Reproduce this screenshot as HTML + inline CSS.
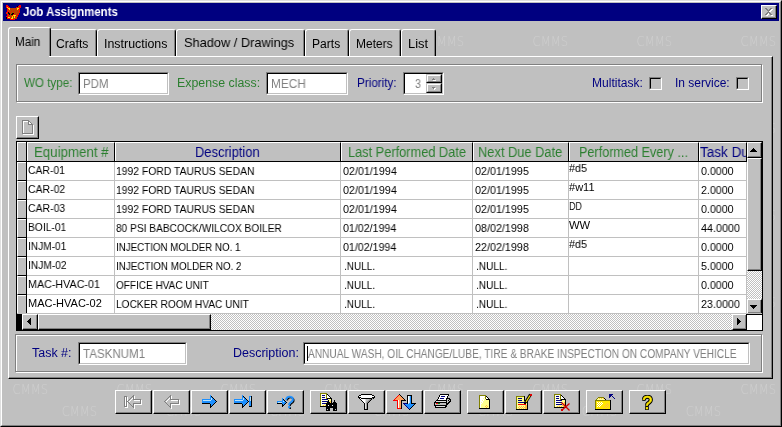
<!DOCTYPE html>
<html>
<head>
<meta charset="utf-8">
<title>Job Assignments</title>
<style>
html,body{margin:0;padding:0;}
body{width:782px;height:427px;background:#c0c0c0;position:relative;overflow:hidden;font-family:"Liberation Sans",Arial,sans-serif;font-size:12px;color:#000;}
*{box-sizing:border-box;}
.abs,.abs *{position:absolute;}
#win{position:absolute;left:0;top:0;width:782px;height:427px;background:#c0c0c0;}
.a{position:absolute;}
.t{position:absolute;white-space:nowrap;line-height:14px;}
.wm{position:absolute;white-space:nowrap;font-size:14px;line-height:14px;color:#c9c9c9;letter-spacing:-0.5px;}
.green{color:#3f7f3f;}
.navy{color:#000080;}
.gray{color:#808080;}
.inp{position:absolute;background:#fff;border-top:1px solid #808080;border-left:1px solid #808080;border-right:1px solid #fff;border-bottom:1px solid #fff;}
.inp>i{position:absolute;left:0;top:0;right:0;bottom:0;border-top:1px solid #000;border-left:1px solid #000;border-right:1px solid #c0c0c0;border-bottom:1px solid #c0c0c0;}
.inp>span{position:absolute;left:5px;top:5px;font-size:11px;line-height:13px;color:#808080;white-space:nowrap;}
.etch{position:absolute;border:1px solid #808080;box-shadow:inset 1px 1px 0 #fff, 1px 1px 0 #fff;}
.btn{position:absolute;background:#c0c0c0;border-top:1px solid #fff;border-left:1px solid #fff;border-right:1px solid #000;border-bottom:1px solid #000;}
.btn>i{position:absolute;left:0;top:0;right:0;bottom:0;border-right:1px solid #808080;border-bottom:1px solid #808080;}
.sp{border-top-color:#c0c0c0;border-left-color:#c0c0c0;}
.sp>i{border-top:1px solid #fff;border-left:1px solid #fff;}
.tab{position:absolute;top:29px;height:27px;border-top:1px solid #fff;border-left:1px solid #fff;border-right:1px solid #000;border-radius:3px 3px 0 0;}
.tab>i{position:absolute;right:0;top:1px;bottom:0;width:1px;background:#808080;}
.tab>span{position:absolute;left:0;right:0;top:7px;text-align:center;font-size:12px;line-height:14px;white-space:nowrap;}
.hd{position:absolute;top:142px;height:19px;background:#c0c0c0;border-top:1px solid #fff;border-left:1px solid #fff;border-right:1px solid #000;}
.hd>span{position:absolute;left:0;right:0;top:2px;}
.cell{position:absolute;font-size:11px;line-height:13px;white-space:nowrap;}
.chk{position:absolute;width:13px;height:13px;background:#c0c0c0;border-top:1px solid #808080;border-left:1px solid #808080;border-right:1px solid #fff;border-bottom:1px solid #fff;}
.chk>i{position:absolute;left:0;top:0;right:0;bottom:0;border-top:1px solid #000;border-left:1px solid #000;border-right:1px solid #c0c0c0;border-bottom:1px solid #c0c0c0;}
.x{will-change:transform;position:absolute;white-space:nowrap;transform-origin:0 0;}
.dither{background-image:conic-gradient(#fff 25%,#c0c0c0 0 50%,#fff 0 75%,#c0c0c0 0);background-size:2px 2px;}
</style>
</head>
<body>
<div id="win">
<!-- window border -->
<div class="a" style="left:0;top:0;width:782px;height:427px;border-top:1px solid #dfdfdf;border-left:1px solid #dfdfdf;border-right:1px solid #000;border-bottom:1px solid #000;"></div>
<div class="a" style="left:1px;top:1px;width:780px;height:425px;border-top:1px solid #fff;border-left:1px solid #fff;border-right:1px solid #808080;border-bottom:1px solid #808080;"></div>
<!-- title bar -->
<div class="a" style="left:3px;top:3px;width:776px;height:18px;background:#000080;"></div>
<svg class="a" style="left:6px;top:5px;" width="15" height="15" viewBox="0 0 15 15" shape-rendering="crispEdges"><rect x="0" y="0" width="2" height="1" fill="#ff0000"/><rect x="13" y="0" width="2" height="1" fill="#ff0000"/><rect x="0" y="1" width="3" height="1" fill="#ff0000"/><rect x="11" y="1" width="1" height="1" fill="#000"/><rect x="12" y="1" width="3" height="1" fill="#ff0000"/><rect x="0" y="2" width="1" height="1" fill="#ff0000"/><rect x="1" y="2" width="1" height="1" fill="#ffe800"/><rect x="2" y="2" width="2" height="1" fill="#ff0000"/><rect x="10" y="2" width="2" height="1" fill="#ff0000"/><rect x="12" y="2" width="1" height="1" fill="#808000"/><rect x="13" y="2" width="2" height="1" fill="#ff0000"/><rect x="1" y="3" width="1" height="1" fill="#ff0000"/><rect x="2" y="3" width="2" height="1" fill="#ffe800"/><rect x="4" y="3" width="1" height="1" fill="#808000"/><rect x="5" y="3" width="1" height="1" fill="#ff0000"/><rect x="6" y="3" width="1" height="1" fill="#808000"/><rect x="7" y="3" width="1" height="1" fill="#ff0000"/><rect x="8" y="3" width="1" height="1" fill="#808000"/><rect x="9" y="3" width="1" height="1" fill="#ff0000"/><rect x="10" y="3" width="1" height="1" fill="#808000"/><rect x="11" y="3" width="2" height="1" fill="#ffe800"/><rect x="13" y="3" width="1" height="1" fill="#ff0000"/><rect x="1" y="4" width="2" height="1" fill="#ff0000"/><rect x="3" y="4" width="1" height="1" fill="#ffe800"/><rect x="4" y="4" width="1" height="1" fill="#ff0000"/><rect x="5" y="4" width="1" height="1" fill="#808000"/><rect x="6" y="4" width="1" height="1" fill="#ff0000"/><rect x="7" y="4" width="1" height="1" fill="#808000"/><rect x="8" y="4" width="1" height="1" fill="#ff0000"/><rect x="9" y="4" width="1" height="1" fill="#808000"/><rect x="10" y="4" width="1" height="1" fill="#ff0000"/><rect x="11" y="4" width="1" height="1" fill="#ffe800"/><rect x="12" y="4" width="2" height="1" fill="#ff0000"/><rect x="1" y="5" width="1" height="1" fill="#ff0000"/><rect x="2" y="5" width="1" height="1" fill="#808000"/><rect x="3" y="5" width="1" height="1" fill="#ff0000"/><rect x="4" y="5" width="1" height="1" fill="#808000"/><rect x="5" y="5" width="1" height="1" fill="#ff0000"/><rect x="6" y="5" width="1" height="1" fill="#808000"/><rect x="7" y="5" width="1" height="1" fill="#ff0000"/><rect x="8" y="5" width="1" height="1" fill="#808000"/><rect x="9" y="5" width="1" height="1" fill="#ff0000"/><rect x="10" y="5" width="1" height="1" fill="#808000"/><rect x="11" y="5" width="1" height="1" fill="#ff0000"/><rect x="12" y="5" width="1" height="1" fill="#808000"/><rect x="13" y="5" width="1" height="1" fill="#ff0000"/><rect x="1" y="6" width="2" height="1" fill="#ff0000"/><rect x="3" y="6" width="1" height="1" fill="#808000"/><rect x="4" y="6" width="1" height="1" fill="#ff0000"/><rect x="5" y="6" width="1" height="1" fill="#808000"/><rect x="6" y="6" width="1" height="1" fill="#ff0000"/><rect x="7" y="6" width="1" height="1" fill="#808000"/><rect x="8" y="6" width="1" height="1" fill="#ff0000"/><rect x="9" y="6" width="1" height="1" fill="#808000"/><rect x="10" y="6" width="1" height="1" fill="#ff0000"/><rect x="11" y="6" width="1" height="1" fill="#808000"/><rect x="12" y="6" width="2" height="1" fill="#ff0000"/><rect x="0" y="7" width="2" height="1" fill="#ff0000"/><rect x="2" y="7" width="1" height="1" fill="#000"/><rect x="3" y="7" width="1" height="1" fill="#ff0000"/><rect x="4" y="7" width="1" height="1" fill="#808000"/><rect x="5" y="7" width="1" height="1" fill="#ff0000"/><rect x="6" y="7" width="1" height="1" fill="#808000"/><rect x="7" y="7" width="1" height="1" fill="#ff0000"/><rect x="8" y="7" width="1" height="1" fill="#808000"/><rect x="9" y="7" width="1" height="1" fill="#ff0000"/><rect x="10" y="7" width="1" height="1" fill="#808000"/><rect x="11" y="7" width="1" height="1" fill="#ff0000"/><rect x="12" y="7" width="1" height="1" fill="#808000"/><rect x="13" y="7" width="1" height="1" fill="#ff0000"/><rect x="0" y="8" width="1" height="1" fill="#ff0000"/><rect x="1" y="8" width="1" height="1" fill="#808000"/><rect x="2" y="8" width="2" height="1" fill="#000"/><rect x="4" y="8" width="1" height="1" fill="#ff0000"/><rect x="5" y="8" width="1" height="1" fill="#808000"/><rect x="6" y="8" width="2" height="1" fill="#000"/><rect x="8" y="8" width="1" height="1" fill="#ff0000"/><rect x="9" y="8" width="1" height="1" fill="#808000"/><rect x="10" y="8" width="1" height="1" fill="#ff0000"/><rect x="11" y="8" width="1" height="1" fill="#808000"/><rect x="12" y="8" width="1" height="1" fill="#ff0000"/><rect x="1" y="9" width="2" height="1" fill="#ff0000"/><rect x="3" y="9" width="1" height="1" fill="#000"/><rect x="4" y="9" width="1" height="1" fill="#808000"/><rect x="5" y="9" width="2" height="1" fill="#000"/><rect x="7" y="9" width="1" height="1" fill="#ff0000"/><rect x="8" y="9" width="1" height="1" fill="#808000"/><rect x="9" y="9" width="1" height="1" fill="#ff0000"/><rect x="10" y="9" width="1" height="1" fill="#808000"/><rect x="11" y="9" width="2" height="1" fill="#ff0000"/><rect x="1" y="10" width="2" height="1" fill="#ff0000"/><rect x="3" y="10" width="1" height="1" fill="#808000"/><rect x="4" y="10" width="1" height="1" fill="#ff0000"/><rect x="5" y="10" width="1" height="1" fill="#808000"/><rect x="6" y="10" width="1" height="1" fill="#ff0000"/><rect x="7" y="10" width="3" height="1" fill="#ffe800"/><rect x="10" y="10" width="2" height="1" fill="#ff0000"/><rect x="0" y="11" width="2" height="1" fill="#ff0000"/><rect x="2" y="11" width="1" height="1" fill="#808000"/><rect x="3" y="11" width="1" height="1" fill="#ff0000"/><rect x="4" y="11" width="1" height="1" fill="#808000"/><rect x="5" y="11" width="1" height="1" fill="#ff0000"/><rect x="6" y="11" width="1" height="1" fill="#ffe800"/><rect x="7" y="11" width="1" height="1" fill="#ff0000"/><rect x="8" y="11" width="1" height="1" fill="#ffe800"/><rect x="9" y="11" width="1" height="1" fill="#ff0000"/><rect x="10" y="11" width="1" height="1" fill="#808000"/><rect x="11" y="11" width="1" height="1" fill="#ff0000"/><rect x="0" y="12" width="1" height="1" fill="#000"/><rect x="1" y="12" width="1" height="1" fill="#ff0000"/><rect x="2" y="12" width="2" height="1" fill="#ffe800"/><rect x="4" y="12" width="1" height="1" fill="#ff0000"/><rect x="5" y="12" width="1" height="1" fill="#808000"/><rect x="6" y="12" width="1" height="1" fill="#ffe800"/><rect x="7" y="12" width="1" height="1" fill="#808000"/><rect x="8" y="12" width="1" height="1" fill="#ffe800"/><rect x="9" y="12" width="1" height="1" fill="#808000"/><rect x="10" y="12" width="1" height="1" fill="#ff0000"/><rect x="0" y="13" width="1" height="1" fill="#000"/><rect x="1" y="13" width="4" height="1" fill="#ff0000"/><rect x="5" y="13" width="2" height="1" fill="#ffe800"/><rect x="7" y="13" width="1" height="1" fill="#ff0000"/><rect x="8" y="13" width="1" height="1" fill="#808000"/><rect x="9" y="13" width="2" height="1" fill="#ff0000"/><rect x="4" y="14" width="5" height="1" fill="#ff0000"/></svg>
<div class="x" style="left:22.80px;top:4.84px;font-size:12px;line-height:14px;color:#fff;transform:scaleX(0.9516);font-weight:bold;">Job Assignments</div>
<!-- close button -->
<div class="btn" style="left:761px;top:5px;width:16px;height:14px;"><i></i>
<svg class="a" style="left:3px;top:2px;" width="9" height="8" viewBox="0 0 9 8" shape-rendering="crispEdges"><path d="M1 1h2v1h1v1h1v-1h1v-1h2v1h-1v1h-1v1h-1v1h1v1h1v1h1v1h-2v-1h-1v-1h-1v1h-1v1h-2v-1h1v-1h1v-1h1v-1h-1v-1h-1v-1h-1z" fill="#fff"/><path d="M0 0h2v1h1v1h1v-1h1v-1h2v1h-1v1h-1v1h-1v1h1v1h1v1h1v1h-2v-1h-1v-1h-1v1h-1v1h-2v-1h1v-1h1v-1h1v-1h-1v-1h-1v-1h-1z" fill="#808080"/></svg>
</div>

<!-- watermarks -->
<svg class="a" style="left:0;top:0;" width="782" height="427">
<defs><pattern id="wmp" x="0" y="30" width="104" height="87" patternUnits="userSpaceOnUse">
<text x="0" y="16" transform="translate(12.6 0) scale(0.80 1)" font-family="DejaVu Sans Light, DejaVu Sans, Liberation Sans, sans-serif" font-weight="200" font-size="14.5" fill="#cecece">CMMS</text>
<text x="0" y="38.2" transform="translate(61.7 0) scale(0.80 1)" font-family="DejaVu Sans Light, DejaVu Sans, Liberation Sans, sans-serif" font-weight="200" font-size="14.5" fill="#cecece">CMMS</text>
</pattern></defs>
<rect x="3" y="21" width="776" height="403" fill="url(#wmp)"/>
</svg>

<!-- tab page -->
<div class="a" style="left:8px;top:56px;width:765px;height:323px;background:#c0c0c0;border-top:1px solid #fff;border-left:1px solid #fff;border-right:1px solid #000;border-bottom:1px solid #000;"></div>
<div class="a" style="left:9px;top:57px;width:763px;height:321px;border-right:1px solid #808080;border-bottom:1px solid #808080;"></div>

<!-- tabs -->
<div class="tab" style="left:51px;width:46px;background:#c0c0c0;border-left:none;border-top-left-radius:0;"><i></i></div>
<div class="tab" style="left:97px;width:79px;background:#c0c0c0;"><i></i></div>
<div class="tab" style="left:176px;width:129px;background:#c0c0c0;"><i></i></div>
<div class="tab" style="left:305px;width:44px;background:#c0c0c0;"><i></i></div>
<div class="tab" style="left:349px;width:52px;background:#c0c0c0;"><i></i></div>
<div class="tab" style="left:401px;width:35px;background:#c0c0c0;"><i></i></div>
<div class="a" style="left:9px;top:56px;width:40px;height:1px;background:#c0c0c0;"></div>
<div class="tab" style="left:8px;top:27px;width:43px;height:29px;background:#c0c0c0;"><i></i></div>

<div class="x" style="left:15.30px;top:34.84px;font-size:12px;line-height:14px;color:#000;transform:scaleX(0.9731);">Main</div>
<div class="x" style="left:56.00px;top:36.84px;font-size:12px;line-height:14px;color:#000;transform:scaleX(1.0125);">Crafts</div>
<div class="x" style="left:103.80px;top:36.84px;font-size:12px;line-height:14px;color:#000;transform:scaleX(1.0346);">Instructions</div>
<div class="x" style="left:184.10px;top:35.32px;font-size:13.5px;line-height:16px;color:#000;transform:scaleX(0.9480);">Shadow / Drawings</div>
<div class="x" style="left:312.20px;top:36.84px;font-size:12px;line-height:14px;color:#000;transform:scaleX(1.0071);">Parts</div>
<div class="x" style="left:356.30px;top:36.84px;font-size:12px;line-height:14px;color:#000;transform:scaleX(0.9939);">Meters</div>
<div class="x" style="left:408.20px;top:36.84px;font-size:12px;line-height:14px;color:#000;transform:scaleX(1.0792);">List</div>
<!-- top panel -->
<div class="etch" style="left:16px;top:64px;width:746px;height:38px;"></div>
<div class="x" style="left:24.40px;top:75.84px;font-size:12px;line-height:14px;color:#2c7f30;transform:scaleX(0.9680);">WO type:</div>
<div class="inp" style="left:78px;top:72px;width:91px;height:23px;"><i></i></div>
<div class="x" style="left:177.30px;top:75.84px;font-size:12px;line-height:14px;color:#2c7f30;transform:scaleX(1.0303);">Expense class:</div>
<div class="inp" style="left:266px;top:72px;width:82px;height:23px;"><i></i></div>
<div class="x" style="left:357.20px;top:75.84px;font-size:12px;line-height:14px;color:#000080;transform:scaleX(0.9748);">Priority:</div>
<div class="inp" style="left:403px;top:72px;width:41px;height:23px;"><i></i></div>
<!-- spinner -->
<div class="btn sp" style="left:426px;top:74px;width:16px;height:9px;"><i></i></div>
<div class="btn sp" style="left:426px;top:83px;width:16px;height:10px;"><i></i></div>
<svg class="a" style="left:431px;top:77px;" width="6" height="14" shape-rendering="crispEdges"><path d="M3 2h1v1h-1zM2 3h3v1h-3zM2 11h3v1h-3zM3 12h1v1h-1z" fill="#fff"/><path d="M2 1h1v1h-1zM1 2h3v1h-3zM1 10h3v1h-3zM2 11h1v1h-1z" fill="#808080"/></svg>
<div class="x" style="left:592.20px;top:75.84px;font-size:12px;line-height:14px;color:#000080;transform:scaleX(1.0035);">Multitask:</div>
<div class="chk" style="left:649px;top:77px;"><i></i></div>
<div class="x" style="left:675.10px;top:75.84px;font-size:12px;line-height:14px;color:#000080;transform:scaleX(0.9995);">In service:</div>
<div class="chk" style="left:736px;top:77px;"><i></i></div>

<!-- small new button -->
<div class="btn" style="left:16px;top:116px;width:23px;height:23px;"><i></i><svg class="a" style="left:5px;top:3px;" width="12" height="15" viewBox="0 0 12 15" shape-rendering="crispEdges"><rect x="0" y="0" width="7" height="1" fill="#808080"/><rect x="0" y="1" width="1" height="1" fill="#808080"/><rect x="1" y="1" width="5" height="1" fill="#fff"/><rect x="6" y="1" width="2" height="1" fill="#808080"/><rect x="0" y="2" width="1" height="1" fill="#808080"/><rect x="1" y="2" width="1" height="1" fill="#fff"/><rect x="6" y="2" width="1" height="1" fill="#808080"/><rect x="7" y="2" width="1" height="1" fill="#fff"/><rect x="8" y="2" width="1" height="1" fill="#808080"/><rect x="0" y="3" width="1" height="1" fill="#808080"/><rect x="1" y="3" width="1" height="1" fill="#fff"/><rect x="6" y="3" width="1" height="1" fill="#808080"/><rect x="7" y="3" width="2" height="1" fill="#fff"/><rect x="9" y="3" width="1" height="1" fill="#808080"/><rect x="0" y="4" width="1" height="1" fill="#808080"/><rect x="1" y="4" width="1" height="1" fill="#fff"/><rect x="6" y="4" width="5" height="1" fill="#808080"/><rect x="0" y="5" width="1" height="1" fill="#808080"/><rect x="1" y="5" width="1" height="1" fill="#fff"/><rect x="10" y="5" width="1" height="1" fill="#808080"/><rect x="11" y="5" width="1" height="1" fill="#fff"/><rect x="0" y="6" width="1" height="1" fill="#808080"/><rect x="1" y="6" width="1" height="1" fill="#fff"/><rect x="10" y="6" width="1" height="1" fill="#808080"/><rect x="11" y="6" width="1" height="1" fill="#fff"/><rect x="0" y="7" width="1" height="1" fill="#808080"/><rect x="1" y="7" width="1" height="1" fill="#fff"/><rect x="10" y="7" width="1" height="1" fill="#808080"/><rect x="11" y="7" width="1" height="1" fill="#fff"/><rect x="0" y="8" width="1" height="1" fill="#808080"/><rect x="1" y="8" width="1" height="1" fill="#fff"/><rect x="10" y="8" width="1" height="1" fill="#808080"/><rect x="11" y="8" width="1" height="1" fill="#fff"/><rect x="0" y="9" width="1" height="1" fill="#808080"/><rect x="1" y="9" width="1" height="1" fill="#fff"/><rect x="10" y="9" width="1" height="1" fill="#808080"/><rect x="11" y="9" width="1" height="1" fill="#fff"/><rect x="0" y="10" width="1" height="1" fill="#808080"/><rect x="1" y="10" width="1" height="1" fill="#fff"/><rect x="10" y="10" width="1" height="1" fill="#808080"/><rect x="11" y="10" width="1" height="1" fill="#fff"/><rect x="0" y="11" width="1" height="1" fill="#808080"/><rect x="1" y="11" width="1" height="1" fill="#fff"/><rect x="10" y="11" width="1" height="1" fill="#808080"/><rect x="11" y="11" width="1" height="1" fill="#fff"/><rect x="0" y="12" width="1" height="1" fill="#808080"/><rect x="1" y="12" width="1" height="1" fill="#fff"/><rect x="10" y="12" width="1" height="1" fill="#808080"/><rect x="11" y="12" width="1" height="1" fill="#fff"/><rect x="0" y="13" width="11" height="1" fill="#808080"/><rect x="11" y="13" width="1" height="1" fill="#fff"/><rect x="1" y="14" width="11" height="1" fill="#fff"/></svg></div>

<!-- grid -->
<div class="a" id="grid" style="left:16px;top:141px;width:747px;height:190px;background:#000;"></div>
<div class="a" style="left:17px;top:142px;width:730px;height:172px;background:#fff;"></div>
<!-- record selector column -->
<div class="a" style="left:17px;top:142px;width:9px;height:172px;background:#c0c0c0;"></div>
<div class="a" style="left:26px;top:142px;width:1px;height:172px;background:#000;"></div>
<div class="a" style="left:17px;top:142px;width:9px;height:19px;border-top:1px solid #fff;border-left:1px solid #fff;"></div>
<!-- header -->
<div class="a" style="left:17px;top:161px;width:730px;height:1px;background:#000;"></div>
<div class="hd" style="left:27px;width:88px;"></div>
<div class="hd" style="left:115px;width:226px;"></div>
<div class="hd" style="left:341px;width:132px;"></div>
<div class="hd" style="left:473px;width:96px;"></div>
<div class="hd" style="left:569px;width:130px;"></div>
<div class="hd" style="left:699px;width:48px;"></div>
<div class="x" style="left:33.90px;top:143.65px;font-size:14px;line-height:17px;color:#2c7f30;transform:scaleX(0.9488);">Equipment #</div>
<div class="x" style="left:195.20px;top:143.65px;font-size:14px;line-height:17px;color:#000080;transform:scaleX(0.9229);">Description</div>
<div class="x" style="left:347.50px;top:143.65px;font-size:14px;line-height:17px;color:#2c7f30;transform:scaleX(0.9131);">Last Performed Date</div>
<div class="x" style="left:478.30px;top:143.65px;font-size:14px;line-height:17px;color:#2c7f30;transform:scaleX(0.9176);">Next Due Date</div>
<div class="x" style="left:578.70px;top:143.65px;font-size:14px;line-height:17px;color:#2c7f30;transform:scaleX(0.9036);">Performed Every ...</div>
<div class="a" style="left:699px;top:143px;width:47px;height:18px;overflow:hidden;"><div class="x" style="left:0.80px;top:0.65px;font-size:14px;line-height:17px;color:#000080;transform:scaleX(0.9650);">Task Du</div></div>
<div class="a" style="left:114px;top:162px;width:1px;height:152px;background:#c0c0c0;"></div>
<div class="a" style="left:340px;top:162px;width:1px;height:152px;background:#c0c0c0;"></div>
<div class="a" style="left:472px;top:162px;width:1px;height:152px;background:#c0c0c0;"></div>
<div class="a" style="left:568px;top:162px;width:1px;height:152px;background:#c0c0c0;"></div>
<div class="a" style="left:698px;top:162px;width:1px;height:152px;background:#c0c0c0;"></div>
<div class="a" style="left:746px;top:162px;width:1px;height:152px;background:#c0c0c0;"></div>
<div class="a" style="left:27px;top:180px;width:720px;height:1px;background:#c0c0c0;"></div>
<div class="a" style="left:17px;top:162px;width:9px;height:19px;border-top:1px solid #fff;border-left:1px solid #fff;border-bottom:1px solid #000;"></div>
<div class="x" style="left:28.30px;top:163.69px;font-size:11px;line-height:13px;color:#000;transform:scaleX(0.9431);">CAR-01</div>
<div class="x" style="left:116.30px;top:164.69px;font-size:11px;line-height:13px;color:#000;transform:scaleX(0.9423);">1992 FORD TAURUS SEDAN</div>
<div class="x" style="left:342.90px;top:164.69px;font-size:11px;line-height:13px;color:#000;transform:scaleX(0.9764);">02/01/1994</div>
<div class="x" style="left:474.50px;top:164.69px;font-size:11px;line-height:13px;color:#000;transform:scaleX(0.9782);">02/01/1995</div>
<div class="x" style="left:568.50px;top:161.69px;font-size:11px;line-height:13px;color:#000;transform:scaleX(0.9796);">#d5</div>
<div class="x" style="left:700.60px;top:164.69px;font-size:11px;line-height:13px;color:#000;transform:scaleX(0.9665);">0.0000</div>
<div class="a" style="left:27px;top:199px;width:720px;height:1px;background:#c0c0c0;"></div>
<div class="a" style="left:17px;top:181px;width:9px;height:19px;border-top:1px solid #fff;border-left:1px solid #fff;border-bottom:1px solid #000;"></div>
<div class="x" style="left:28.30px;top:182.69px;font-size:11px;line-height:13px;color:#000;transform:scaleX(0.9508);">CAR-02</div>
<div class="x" style="left:116.30px;top:183.69px;font-size:11px;line-height:13px;color:#000;transform:scaleX(0.9423);">1992 FORD TAURUS SEDAN</div>
<div class="x" style="left:342.90px;top:183.69px;font-size:11px;line-height:13px;color:#000;transform:scaleX(0.9764);">02/01/1994</div>
<div class="x" style="left:474.50px;top:183.69px;font-size:11px;line-height:13px;color:#000;transform:scaleX(0.9782);">02/01/1995</div>
<div class="x" style="left:568.50px;top:180.69px;font-size:11px;line-height:13px;color:#000;transform:scaleX(1.0039);">#w11</div>
<div class="x" style="left:700.60px;top:183.69px;font-size:11px;line-height:13px;color:#000;transform:scaleX(0.9665);">2.0000</div>
<div class="a" style="left:27px;top:218px;width:720px;height:1px;background:#c0c0c0;"></div>
<div class="a" style="left:17px;top:200px;width:9px;height:19px;border-top:1px solid #fff;border-left:1px solid #fff;border-bottom:1px solid #000;"></div>
<div class="x" style="left:28.30px;top:201.69px;font-size:11px;line-height:13px;color:#000;transform:scaleX(0.9508);">CAR-03</div>
<div class="x" style="left:116.30px;top:202.69px;font-size:11px;line-height:13px;color:#000;transform:scaleX(0.9423);">1992 FORD TAURUS SEDAN</div>
<div class="x" style="left:342.90px;top:202.69px;font-size:11px;line-height:13px;color:#000;transform:scaleX(0.9764);">02/01/1994</div>
<div class="x" style="left:474.50px;top:202.69px;font-size:11px;line-height:13px;color:#000;transform:scaleX(0.9782);">02/01/1995</div>
<div class="x" style="left:569.10px;top:199.69px;font-size:11px;line-height:13px;color:#000;transform:scaleX(0.8126);">DD</div>
<div class="x" style="left:700.60px;top:202.69px;font-size:11px;line-height:13px;color:#000;transform:scaleX(0.9665);">0.0000</div>
<div class="a" style="left:27px;top:237px;width:720px;height:1px;background:#c0c0c0;"></div>
<div class="a" style="left:17px;top:219px;width:9px;height:19px;border-top:1px solid #fff;border-left:1px solid #fff;border-bottom:1px solid #000;"></div>
<div class="x" style="left:28.30px;top:220.69px;font-size:11px;line-height:13px;color:#000;transform:scaleX(0.9341);">BOIL-01</div>
<div class="x" style="left:116.30px;top:221.69px;font-size:11px;line-height:13px;color:#000;transform:scaleX(0.9224);">80 PSI BABCOCK/WILCOX BOILER</div>
<div class="x" style="left:343.40px;top:221.69px;font-size:11px;line-height:13px;color:#000;transform:scaleX(0.9673);">01/02/1994</div>
<div class="x" style="left:474.50px;top:221.69px;font-size:11px;line-height:13px;color:#000;transform:scaleX(0.9782);">08/02/1998</div>
<div class="x" style="left:568.50px;top:218.69px;font-size:11px;line-height:13px;color:#000;transform:scaleX(1.0217);">WW</div>
<div class="x" style="left:700.60px;top:221.69px;font-size:11px;line-height:13px;color:#000;transform:scaleX(0.9786);">44.0000</div>
<div class="a" style="left:27px;top:256px;width:720px;height:1px;background:#c0c0c0;"></div>
<div class="a" style="left:17px;top:238px;width:9px;height:19px;border-top:1px solid #fff;border-left:1px solid #fff;border-bottom:1px solid #000;"></div>
<div class="x" style="left:28.30px;top:239.69px;font-size:11px;line-height:13px;color:#000;transform:scaleX(0.9201);">INJM-01</div>
<div class="x" style="left:116.30px;top:240.69px;font-size:11px;line-height:13px;color:#000;transform:scaleX(0.8893);">INJECTION MOLDER NO. 1</div>
<div class="x" style="left:343.40px;top:240.69px;font-size:11px;line-height:13px;color:#000;transform:scaleX(0.9673);">01/02/1994</div>
<div class="x" style="left:474.50px;top:240.69px;font-size:11px;line-height:13px;color:#000;transform:scaleX(0.9782);">22/02/1998</div>
<div class="x" style="left:568.50px;top:237.69px;font-size:11px;line-height:13px;color:#000;transform:scaleX(0.9796);">#d5</div>
<div class="x" style="left:700.60px;top:240.69px;font-size:11px;line-height:13px;color:#000;transform:scaleX(0.9665);">0.0000</div>
<div class="a" style="left:27px;top:275px;width:720px;height:1px;background:#c0c0c0;"></div>
<div class="a" style="left:17px;top:257px;width:9px;height:19px;border-top:1px solid #fff;border-left:1px solid #fff;border-bottom:1px solid #000;"></div>
<div class="x" style="left:28.30px;top:258.69px;font-size:11px;line-height:13px;color:#000;transform:scaleX(0.9273);">INJM-02</div>
<div class="x" style="left:116.30px;top:259.69px;font-size:11px;line-height:13px;color:#000;transform:scaleX(0.8964);">INJECTION MOLDER NO. 2</div>
<div class="x" style="left:343.60px;top:259.69px;font-size:11px;line-height:13px;color:#000;transform:scaleX(0.9080);">.NULL.</div>
<div class="x" style="left:475.60px;top:259.69px;font-size:11px;line-height:13px;color:#000;transform:scaleX(0.9168);">.NULL.</div>
<div class="x" style="left:700.60px;top:259.69px;font-size:11px;line-height:13px;color:#000;transform:scaleX(0.9665);">5.0000</div>
<div class="a" style="left:27px;top:294px;width:720px;height:1px;background:#c0c0c0;"></div>
<div class="a" style="left:17px;top:276px;width:9px;height:19px;border-top:1px solid #fff;border-left:1px solid #fff;border-bottom:1px solid #000;"></div>
<div class="x" style="left:28.30px;top:277.69px;font-size:11px;line-height:13px;color:#000;transform:scaleX(0.9749);">MAC-HVAC-01</div>
<div class="x" style="left:116.30px;top:278.69px;font-size:11px;line-height:13px;color:#000;transform:scaleX(0.9099);">OFFICE HVAC UNIT</div>
<div class="x" style="left:343.60px;top:278.69px;font-size:11px;line-height:13px;color:#000;transform:scaleX(0.9080);">.NULL.</div>
<div class="x" style="left:475.60px;top:278.69px;font-size:11px;line-height:13px;color:#000;transform:scaleX(0.9168);">.NULL.</div>
<div class="x" style="left:700.60px;top:278.69px;font-size:11px;line-height:13px;color:#000;transform:scaleX(0.9665);">0.0000</div>
<div class="a" style="left:27px;top:313px;width:720px;height:1px;background:#c0c0c0;"></div>
<div class="a" style="left:17px;top:295px;width:9px;height:19px;border-top:1px solid #fff;border-left:1px solid #fff;border-bottom:1px solid #000;"></div>
<div class="x" style="left:28.30px;top:296.69px;font-size:11px;line-height:13px;color:#000;transform:scaleX(0.9993);">MAC-HVAC-02</div>
<div class="x" style="left:116.30px;top:297.69px;font-size:11px;line-height:13px;color:#000;transform:scaleX(0.9229);">LOCKER ROOM HVAC UNIT</div>
<div class="x" style="left:343.60px;top:297.69px;font-size:11px;line-height:13px;color:#000;transform:scaleX(0.9080);">.NULL.</div>
<div class="x" style="left:475.60px;top:297.69px;font-size:11px;line-height:13px;color:#000;transform:scaleX(0.9168);">.NULL.</div>
<div class="x" style="left:700.60px;top:297.69px;font-size:11px;line-height:13px;color:#000;transform:scaleX(0.9786);">23.0000</div>
<!-- vertical scrollbar -->
<div class="a dither" style="left:747px;top:162px;width:15px;height:152px;"></div>
<div class="btn" style="left:747px;top:142px;width:15px;height:16px;"><i></i><svg class="a" style="left:2px;top:5px;" width="7" height="4" shape-rendering="crispEdges"><path d="M3 0h1v1h1v1h1v1h1v1h-7v-1h1v-1h1v-1h1z" fill="#000"/></svg></div>
<div class="btn" style="left:747px;top:158px;width:15px;height:113px;"><i></i></div>
<div class="btn" style="left:747px;top:299px;width:15px;height:15px;"><i></i><svg class="a" style="left:2px;top:5px;" width="7" height="4" shape-rendering="crispEdges"><path d="M0 0h7v1h-1v1h-1v1h-1v1h-1v-1h-1v-1h-1v-1h-1z" fill="#000"/></svg></div>
<!-- horizontal scrollbar -->
<div class="a" style="left:17px;top:313px;width:745px;height:1px;background:#c0c0c0;"></div>
<div class="a dither" style="left:22px;top:314px;width:724px;height:16px;"></div>
<div class="a" style="left:17px;top:314px;width:5px;height:16px;background:#000;"></div>
<div class="btn" style="left:22px;top:314px;width:16px;height:16px;"><i></i><svg class="a" style="left:4px;top:3px;" width="4" height="7" shape-rendering="crispEdges"><path d="M3 0h1v7h-1v-1h-1v-1h-1v-1h-1v-1h1v-1h1v-1h1z" fill="#000"/></svg></div>
<div class="btn" style="left:38px;top:314px;width:173px;height:16px;"><i></i></div>
<div class="btn" style="left:732px;top:314px;width:15px;height:16px;"><i></i><svg class="a" style="left:4px;top:3px;" width="4" height="7" shape-rendering="crispEdges"><path d="M0 0h1v1h1v1h1v1h1v1h-1v1h-1v1h-1v1h-1z" fill="#000"/></svg></div>
<div class="a" style="left:746px;top:314px;width:17px;height:17px;background:#000;"></div>
<div class="a" style="left:747px;top:315px;width:15px;height:15px;background:#fff;"></div>

<!-- bottom panel -->
<div class="etch" style="left:15px;top:334px;width:747px;height:38px;"></div>
<div class="x" style="left:32.00px;top:345.84px;font-size:12px;line-height:14px;color:#000080;transform:scaleX(1.0395);">Task #:</div>
<div class="inp" style="left:78px;top:342px;width:109px;height:23px;"><i></i></div>
<div class="x" style="left:233.10px;top:345.84px;font-size:12px;line-height:14px;color:#000080;transform:scaleX(1.0398);">Description:</div>
<div class="inp" style="left:303px;top:342px;width:447px;height:23px;"><i></i><b class="a" style="left:3px;top:3px;width:1px;height:15px;background:#000;"></b></div>

<div class="x" style="left:83.30px;top:76.84px;font-size:12px;line-height:14px;color:#808080;transform:scaleX(0.9540);">PDM</div>
<div class="x" style="left:271.20px;top:76.84px;font-size:12px;line-height:14px;color:#808080;transform:scaleX(0.9837);">MECH</div>
<div class="x" style="left:415.40px;top:76.84px;font-size:12px;line-height:14px;color:#808080;transform:scaleX(0.8906);">3</div>
<div class="x" style="left:82.50px;top:346.84px;font-size:12px;line-height:14px;color:#808080;transform:scaleX(0.9643);">TASKNUM1</div>
<div class="x" style="left:308.10px;top:346.84px;font-size:12px;line-height:14px;color:#808080;transform:scaleX(0.8456);">ANNUAL WASH, OIL CHANGE/LUBE, TIRE &amp; BRAKE INSPECTION ON COMPANY VEHICLE</div>
<div class="btn" style="left:115px;top:390px;width:37px;height:24px;"><i></i><svg class="a" style="left:-1px;top:-1px;" width="37" height="24" viewBox="0 0 37 24" shape-rendering="crispEdges"><rect x="10" y="7" width="3" height="1" fill="#fff"/><rect x="10" y="8" width="1" height="1" fill="#fff"/><rect x="12" y="8" width="1" height="1" fill="#fff"/><rect x="10" y="9" width="1" height="1" fill="#fff"/><rect x="12" y="9" width="1" height="1" fill="#fff"/><rect x="10" y="10" width="1" height="1" fill="#fff"/><rect x="12" y="10" width="1" height="1" fill="#fff"/><rect x="10" y="11" width="1" height="1" fill="#fff"/><rect x="12" y="11" width="1" height="1" fill="#fff"/><rect x="10" y="12" width="1" height="1" fill="#fff"/><rect x="12" y="12" width="1" height="1" fill="#fff"/><rect x="10" y="13" width="1" height="1" fill="#fff"/><rect x="12" y="13" width="1" height="1" fill="#fff"/><rect x="10" y="14" width="1" height="1" fill="#fff"/><rect x="12" y="14" width="1" height="1" fill="#fff"/><rect x="10" y="15" width="1" height="1" fill="#fff"/><rect x="12" y="15" width="1" height="1" fill="#fff"/><rect x="10" y="16" width="1" height="1" fill="#fff"/><rect x="12" y="16" width="1" height="1" fill="#fff"/><rect x="10" y="17" width="3" height="1" fill="#fff"/><rect x="19" y="6" width="1" height="1" fill="#fff"/><rect x="18" y="7" width="2" height="1" fill="#fff"/><rect x="17" y="8" width="1" height="1" fill="#fff"/><rect x="19" y="8" width="1" height="1" fill="#fff"/><rect x="16" y="9" width="1" height="1" fill="#fff"/><rect x="19" y="9" width="1" height="1" fill="#fff"/><rect x="15" y="10" width="1" height="1" fill="#fff"/><rect x="19" y="10" width="8" height="1" fill="#fff"/><rect x="14" y="11" width="1" height="1" fill="#fff"/><rect x="26" y="11" width="1" height="1" fill="#fff"/><rect x="13" y="12" width="1" height="1" fill="#fff"/><rect x="26" y="12" width="1" height="1" fill="#fff"/><rect x="14" y="13" width="1" height="1" fill="#fff"/><rect x="26" y="13" width="1" height="1" fill="#fff"/><rect x="15" y="14" width="1" height="1" fill="#fff"/><rect x="19" y="14" width="8" height="1" fill="#fff"/><rect x="16" y="15" width="1" height="1" fill="#fff"/><rect x="19" y="15" width="1" height="1" fill="#fff"/><rect x="17" y="16" width="1" height="1" fill="#fff"/><rect x="19" y="16" width="1" height="1" fill="#fff"/><rect x="18" y="17" width="2" height="1" fill="#fff"/><rect x="19" y="18" width="1" height="1" fill="#fff"/><rect x="9" y="6" width="3" height="1" fill="#808080"/><rect x="9" y="7" width="1" height="1" fill="#808080"/><rect x="11" y="7" width="1" height="1" fill="#808080"/><rect x="9" y="8" width="1" height="1" fill="#808080"/><rect x="11" y="8" width="1" height="1" fill="#808080"/><rect x="9" y="9" width="1" height="1" fill="#808080"/><rect x="11" y="9" width="1" height="1" fill="#808080"/><rect x="9" y="10" width="1" height="1" fill="#808080"/><rect x="11" y="10" width="1" height="1" fill="#808080"/><rect x="9" y="11" width="1" height="1" fill="#808080"/><rect x="11" y="11" width="1" height="1" fill="#808080"/><rect x="9" y="12" width="1" height="1" fill="#808080"/><rect x="11" y="12" width="1" height="1" fill="#808080"/><rect x="9" y="13" width="1" height="1" fill="#808080"/><rect x="11" y="13" width="1" height="1" fill="#808080"/><rect x="9" y="14" width="1" height="1" fill="#808080"/><rect x="11" y="14" width="1" height="1" fill="#808080"/><rect x="9" y="15" width="1" height="1" fill="#808080"/><rect x="11" y="15" width="1" height="1" fill="#808080"/><rect x="9" y="16" width="3" height="1" fill="#808080"/><rect x="18" y="5" width="1" height="1" fill="#808080"/><rect x="17" y="6" width="2" height="1" fill="#808080"/><rect x="16" y="7" width="1" height="1" fill="#808080"/><rect x="18" y="7" width="1" height="1" fill="#808080"/><rect x="15" y="8" width="1" height="1" fill="#808080"/><rect x="18" y="8" width="1" height="1" fill="#808080"/><rect x="14" y="9" width="1" height="1" fill="#808080"/><rect x="18" y="9" width="8" height="1" fill="#808080"/><rect x="13" y="10" width="1" height="1" fill="#808080"/><rect x="25" y="10" width="1" height="1" fill="#808080"/><rect x="12" y="11" width="1" height="1" fill="#808080"/><rect x="25" y="11" width="1" height="1" fill="#808080"/><rect x="13" y="12" width="1" height="1" fill="#808080"/><rect x="25" y="12" width="1" height="1" fill="#808080"/><rect x="14" y="13" width="1" height="1" fill="#808080"/><rect x="18" y="13" width="8" height="1" fill="#808080"/><rect x="15" y="14" width="1" height="1" fill="#808080"/><rect x="18" y="14" width="1" height="1" fill="#808080"/><rect x="16" y="15" width="1" height="1" fill="#808080"/><rect x="18" y="15" width="1" height="1" fill="#808080"/><rect x="17" y="16" width="2" height="1" fill="#808080"/><rect x="18" y="17" width="1" height="1" fill="#808080"/></svg></div>
<div class="btn" style="left:153px;top:390px;width:37px;height:24px;"><i></i><svg class="a" style="left:-1px;top:-1px;" width="37" height="24" viewBox="0 0 37 24" shape-rendering="crispEdges"><rect x="18" y="6" width="1" height="1" fill="#fff"/><rect x="17" y="7" width="2" height="1" fill="#fff"/><rect x="16" y="8" width="1" height="1" fill="#fff"/><rect x="18" y="8" width="1" height="1" fill="#fff"/><rect x="15" y="9" width="1" height="1" fill="#fff"/><rect x="18" y="9" width="1" height="1" fill="#fff"/><rect x="14" y="10" width="1" height="1" fill="#fff"/><rect x="18" y="10" width="9" height="1" fill="#fff"/><rect x="13" y="11" width="1" height="1" fill="#fff"/><rect x="26" y="11" width="1" height="1" fill="#fff"/><rect x="12" y="12" width="1" height="1" fill="#fff"/><rect x="26" y="12" width="1" height="1" fill="#fff"/><rect x="13" y="13" width="1" height="1" fill="#fff"/><rect x="26" y="13" width="1" height="1" fill="#fff"/><rect x="14" y="14" width="1" height="1" fill="#fff"/><rect x="18" y="14" width="9" height="1" fill="#fff"/><rect x="15" y="15" width="1" height="1" fill="#fff"/><rect x="18" y="15" width="1" height="1" fill="#fff"/><rect x="16" y="16" width="1" height="1" fill="#fff"/><rect x="18" y="16" width="1" height="1" fill="#fff"/><rect x="17" y="17" width="2" height="1" fill="#fff"/><rect x="18" y="18" width="1" height="1" fill="#fff"/><rect x="17" y="5" width="1" height="1" fill="#808080"/><rect x="16" y="6" width="2" height="1" fill="#808080"/><rect x="15" y="7" width="1" height="1" fill="#808080"/><rect x="17" y="7" width="1" height="1" fill="#808080"/><rect x="14" y="8" width="1" height="1" fill="#808080"/><rect x="17" y="8" width="1" height="1" fill="#808080"/><rect x="13" y="9" width="1" height="1" fill="#808080"/><rect x="17" y="9" width="9" height="1" fill="#808080"/><rect x="12" y="10" width="1" height="1" fill="#808080"/><rect x="25" y="10" width="1" height="1" fill="#808080"/><rect x="11" y="11" width="1" height="1" fill="#808080"/><rect x="25" y="11" width="1" height="1" fill="#808080"/><rect x="12" y="12" width="1" height="1" fill="#808080"/><rect x="25" y="12" width="1" height="1" fill="#808080"/><rect x="13" y="13" width="1" height="1" fill="#808080"/><rect x="17" y="13" width="9" height="1" fill="#808080"/><rect x="14" y="14" width="1" height="1" fill="#808080"/><rect x="17" y="14" width="1" height="1" fill="#808080"/><rect x="15" y="15" width="1" height="1" fill="#808080"/><rect x="17" y="15" width="1" height="1" fill="#808080"/><rect x="16" y="16" width="2" height="1" fill="#808080"/><rect x="17" y="17" width="1" height="1" fill="#808080"/></svg></div>
<div class="btn" style="left:191px;top:390px;width:37px;height:24px;"><i></i><svg class="a" style="left:-1px;top:-1px;" width="37" height="24" viewBox="0 0 37 24" shape-rendering="crispEdges"><rect x="19" y="5" width="1" height="1" fill="#1e90ff"/><rect x="19" y="6" width="1" height="1" fill="#1e90ff"/><rect x="20" y="6" width="1" height="1" fill="#000"/><rect x="19" y="7" width="2" height="1" fill="#1e90ff"/><rect x="21" y="7" width="1" height="1" fill="#000"/><rect x="19" y="8" width="1" height="1" fill="#1e90ff"/><rect x="20" y="8" width="1" height="1" fill="#b8e4ff"/><rect x="21" y="8" width="1" height="1" fill="#1e90ff"/><rect x="22" y="8" width="1" height="1" fill="#000"/><rect x="11" y="9" width="9" height="1" fill="#1e90ff"/><rect x="20" y="9" width="1" height="1" fill="#b8e4ff"/><rect x="21" y="9" width="2" height="1" fill="#1e90ff"/><rect x="23" y="9" width="1" height="1" fill="#000"/><rect x="11" y="10" width="1" height="1" fill="#1e90ff"/><rect x="12" y="10" width="8" height="1" fill="#b8e4ff"/><rect x="20" y="10" width="4" height="1" fill="#1e90ff"/><rect x="24" y="10" width="1" height="1" fill="#000"/><rect x="11" y="11" width="14" height="1" fill="#1e90ff"/><rect x="25" y="11" width="1" height="1" fill="#000"/><rect x="11" y="12" width="13" height="1" fill="#1e90ff"/><rect x="24" y="12" width="1" height="1" fill="#000"/><rect x="11" y="13" width="8" height="1" fill="#000"/><rect x="19" y="13" width="4" height="1" fill="#1e90ff"/><rect x="23" y="13" width="1" height="1" fill="#000"/><rect x="19" y="14" width="1" height="1" fill="#000"/><rect x="20" y="14" width="2" height="1" fill="#1e90ff"/><rect x="22" y="14" width="1" height="1" fill="#000"/><rect x="19" y="15" width="1" height="1" fill="#000"/><rect x="20" y="15" width="1" height="1" fill="#1e90ff"/><rect x="21" y="15" width="1" height="1" fill="#000"/><rect x="19" y="16" width="2" height="1" fill="#000"/><rect x="19" y="17" width="1" height="1" fill="#000"/></svg></div>
<div class="btn" style="left:229px;top:390px;width:37px;height:24px;"><i></i><svg class="a" style="left:-1px;top:-1px;" width="37" height="24" viewBox="0 0 37 24" shape-rendering="crispEdges"><rect x="13" y="5" width="1" height="1" fill="#1e90ff"/><rect x="13" y="6" width="1" height="1" fill="#1e90ff"/><rect x="14" y="6" width="1" height="1" fill="#000"/><rect x="13" y="7" width="2" height="1" fill="#1e90ff"/><rect x="15" y="7" width="1" height="1" fill="#000"/><rect x="13" y="8" width="1" height="1" fill="#1e90ff"/><rect x="14" y="8" width="1" height="1" fill="#b8e4ff"/><rect x="15" y="8" width="1" height="1" fill="#1e90ff"/><rect x="16" y="8" width="1" height="1" fill="#000"/><rect x="5" y="9" width="9" height="1" fill="#1e90ff"/><rect x="14" y="9" width="1" height="1" fill="#b8e4ff"/><rect x="15" y="9" width="2" height="1" fill="#1e90ff"/><rect x="17" y="9" width="1" height="1" fill="#000"/><rect x="5" y="10" width="1" height="1" fill="#1e90ff"/><rect x="6" y="10" width="8" height="1" fill="#b8e4ff"/><rect x="14" y="10" width="4" height="1" fill="#1e90ff"/><rect x="18" y="10" width="1" height="1" fill="#000"/><rect x="5" y="11" width="14" height="1" fill="#1e90ff"/><rect x="19" y="11" width="1" height="1" fill="#000"/><rect x="5" y="12" width="13" height="1" fill="#1e90ff"/><rect x="18" y="12" width="1" height="1" fill="#000"/><rect x="5" y="13" width="8" height="1" fill="#000"/><rect x="13" y="13" width="4" height="1" fill="#1e90ff"/><rect x="17" y="13" width="1" height="1" fill="#000"/><rect x="13" y="14" width="1" height="1" fill="#000"/><rect x="14" y="14" width="2" height="1" fill="#1e90ff"/><rect x="16" y="14" width="1" height="1" fill="#000"/><rect x="13" y="15" width="1" height="1" fill="#000"/><rect x="14" y="15" width="1" height="1" fill="#1e90ff"/><rect x="15" y="15" width="1" height="1" fill="#000"/><rect x="13" y="16" width="2" height="1" fill="#000"/><rect x="13" y="17" width="1" height="1" fill="#000"/><rect x="20" y="6" width="2" height="1" fill="#1e90ff"/><rect x="22" y="6" width="1" height="1" fill="#000"/><rect x="20" y="7" width="1" height="1" fill="#1e90ff"/><rect x="21" y="7" width="1" height="1" fill="#b8e4ff"/><rect x="22" y="7" width="1" height="1" fill="#000"/><rect x="20" y="8" width="1" height="1" fill="#1e90ff"/><rect x="21" y="8" width="1" height="1" fill="#b8e4ff"/><rect x="22" y="8" width="1" height="1" fill="#000"/><rect x="20" y="9" width="1" height="1" fill="#1e90ff"/><rect x="21" y="9" width="1" height="1" fill="#b8e4ff"/><rect x="22" y="9" width="1" height="1" fill="#000"/><rect x="20" y="10" width="1" height="1" fill="#1e90ff"/><rect x="21" y="10" width="1" height="1" fill="#b8e4ff"/><rect x="22" y="10" width="1" height="1" fill="#000"/><rect x="20" y="11" width="2" height="1" fill="#1e90ff"/><rect x="22" y="11" width="1" height="1" fill="#000"/><rect x="20" y="12" width="2" height="1" fill="#1e90ff"/><rect x="22" y="12" width="1" height="1" fill="#000"/><rect x="20" y="13" width="2" height="1" fill="#1e90ff"/><rect x="22" y="13" width="1" height="1" fill="#000"/><rect x="20" y="14" width="2" height="1" fill="#1e90ff"/><rect x="22" y="14" width="1" height="1" fill="#000"/><rect x="20" y="15" width="2" height="1" fill="#1e90ff"/><rect x="22" y="15" width="1" height="1" fill="#000"/><rect x="20" y="16" width="3" height="1" fill="#000"/></svg></div>
<div class="btn" style="left:267px;top:390px;width:37px;height:24px;"><i></i><svg class="a" style="left:-1px;top:-1px;" width="37" height="24" viewBox="0 0 37 24" shape-rendering="crispEdges"><rect x="15" y="8" width="1" height="1" fill="#1e90ff"/><rect x="15" y="9" width="1" height="1" fill="#1e90ff"/><rect x="16" y="9" width="1" height="1" fill="#000"/><rect x="15" y="10" width="2" height="1" fill="#1e90ff"/><rect x="17" y="10" width="1" height="1" fill="#000"/><rect x="10" y="11" width="6" height="1" fill="#1e90ff"/><rect x="16" y="11" width="1" height="1" fill="#b8e4ff"/><rect x="17" y="11" width="1" height="1" fill="#1e90ff"/><rect x="18" y="11" width="1" height="1" fill="#000"/><rect x="10" y="12" width="1" height="1" fill="#1e90ff"/><rect x="11" y="12" width="4" height="1" fill="#b8e4ff"/><rect x="15" y="12" width="4" height="1" fill="#1e90ff"/><rect x="19" y="12" width="1" height="1" fill="#000"/><rect x="10" y="13" width="5" height="1" fill="#000"/><rect x="15" y="13" width="3" height="1" fill="#1e90ff"/><rect x="18" y="13" width="1" height="1" fill="#000"/><rect x="15" y="14" width="1" height="1" fill="#000"/><rect x="16" y="14" width="1" height="1" fill="#1e90ff"/><rect x="17" y="14" width="1" height="1" fill="#000"/><rect x="15" y="15" width="2" height="1" fill="#000"/><rect x="15" y="16" width="1" height="1" fill="#000"/></svg><span class="a" style="left:16.8px;top:1.5px;font-size:17px;line-height:20px;color:#1e90ff;-webkit-text-stroke:0.5px #1e90ff;text-shadow:1px 1px 0 #000;">?</span></div>
<div class="btn" style="left:310px;top:390px;width:37px;height:24px;"><i></i><svg class="a" style="left:-1px;top:-1px;" width="37" height="24" viewBox="0 0 37 24" shape-rendering="crispEdges"><rect x="10" y="3" width="7" height="1" fill="#808000"/><rect x="10" y="4" width="1" height="1" fill="#808000"/><rect x="11" y="4" width="5" height="1" fill="#ffffe8"/><rect x="16" y="4" width="1" height="1" fill="#808000"/><rect x="17" y="4" width="1" height="1" fill="#000"/><rect x="10" y="5" width="1" height="1" fill="#808000"/><rect x="11" y="5" width="1" height="1" fill="#ffffe8"/><rect x="12" y="5" width="3" height="1" fill="#000080"/><rect x="15" y="5" width="1" height="1" fill="#ffffe8"/><rect x="16" y="5" width="1" height="1" fill="#808000"/><rect x="17" y="5" width="1" height="1" fill="#fff"/><rect x="18" y="5" width="1" height="1" fill="#000"/><rect x="10" y="6" width="1" height="1" fill="#808000"/><rect x="11" y="6" width="5" height="1" fill="#ffffe8"/><rect x="16" y="6" width="1" height="1" fill="#808000"/><rect x="17" y="6" width="2" height="1" fill="#fff"/><rect x="19" y="6" width="1" height="1" fill="#000"/><rect x="10" y="7" width="1" height="1" fill="#808000"/><rect x="11" y="7" width="1" height="1" fill="#ffffe8"/><rect x="12" y="7" width="3" height="1" fill="#000080"/><rect x="15" y="7" width="1" height="1" fill="#ffffe8"/><rect x="16" y="7" width="1" height="1" fill="#808000"/><rect x="17" y="7" width="3" height="1" fill="#fff"/><rect x="20" y="7" width="1" height="1" fill="#000"/><rect x="10" y="8" width="1" height="1" fill="#808000"/><rect x="11" y="8" width="5" height="1" fill="#ffffe8"/><rect x="16" y="8" width="1" height="1" fill="#808000"/><rect x="17" y="8" width="5" height="1" fill="#000"/><rect x="10" y="9" width="1" height="1" fill="#808000"/><rect x="11" y="9" width="1" height="1" fill="#ffffe8"/><rect x="12" y="9" width="6" height="1" fill="#000080"/><rect x="18" y="9" width="3" height="1" fill="#ffff90"/><rect x="21" y="9" width="1" height="1" fill="#000"/><rect x="10" y="10" width="1" height="1" fill="#808000"/><rect x="11" y="10" width="6" height="1" fill="#ffffe8"/><rect x="17" y="10" width="4" height="1" fill="#ffff90"/><rect x="21" y="10" width="1" height="1" fill="#000"/><rect x="10" y="11" width="1" height="1" fill="#808000"/><rect x="11" y="11" width="1" height="1" fill="#ffffe8"/><rect x="12" y="11" width="6" height="1" fill="#000080"/><rect x="18" y="11" width="2" height="1" fill="#ffff90"/><rect x="20" y="11" width="1" height="1" fill="#ffc040"/><rect x="21" y="11" width="1" height="1" fill="#000"/><rect x="10" y="12" width="1" height="1" fill="#808000"/><rect x="11" y="12" width="5" height="1" fill="#ffffe8"/><rect x="16" y="12" width="4" height="1" fill="#ffff90"/><rect x="20" y="12" width="1" height="1" fill="#ffc040"/><rect x="21" y="12" width="1" height="1" fill="#000"/><rect x="10" y="13" width="1" height="1" fill="#808000"/><rect x="11" y="13" width="1" height="1" fill="#ffffe8"/><rect x="12" y="13" width="6" height="1" fill="#000080"/><rect x="18" y="13" width="1" height="1" fill="#ffff90"/><rect x="19" y="13" width="2" height="1" fill="#ffc040"/><rect x="21" y="13" width="1" height="1" fill="#000"/><rect x="10" y="14" width="1" height="1" fill="#808000"/><rect x="11" y="14" width="3" height="1" fill="#ffffe8"/><rect x="14" y="14" width="4" height="1" fill="#ffff90"/><rect x="18" y="14" width="1" height="1" fill="#ffc040"/><rect x="19" y="14" width="1" height="1" fill="#ffff90"/><rect x="20" y="14" width="1" height="1" fill="#ffc040"/><rect x="21" y="14" width="1" height="1" fill="#000"/><rect x="10" y="15" width="1" height="1" fill="#808000"/><rect x="11" y="15" width="1" height="1" fill="#ffffe8"/><rect x="12" y="15" width="1" height="1" fill="#ffff90"/><rect x="13" y="15" width="1" height="1" fill="#ffc040"/><rect x="14" y="15" width="1" height="1" fill="#ffff90"/><rect x="15" y="15" width="1" height="1" fill="#ffc040"/><rect x="16" y="15" width="1" height="1" fill="#ffff90"/><rect x="17" y="15" width="1" height="1" fill="#ffc040"/><rect x="18" y="15" width="1" height="1" fill="#ffff90"/><rect x="19" y="15" width="2" height="1" fill="#ffc040"/><rect x="21" y="15" width="1" height="1" fill="#000"/><rect x="10" y="16" width="12" height="1" fill="#000"/><rect x="18" y="10" width="1" height="1" fill="#000"/><rect x="24" y="10" width="1" height="1" fill="#000"/><rect x="18" y="11" width="1" height="1" fill="#000"/><rect x="24" y="11" width="1" height="1" fill="#000"/><rect x="17" y="12" width="3" height="1" fill="#000"/><rect x="23" y="12" width="3" height="1" fill="#000"/><rect x="16" y="13" width="11" height="1" fill="#000"/><rect x="16" y="14" width="11" height="1" fill="#000"/><rect x="16" y="15" width="2" height="1" fill="#000"/><rect x="18" y="15" width="1" height="1" fill="#fff"/><rect x="19" y="15" width="3" height="1" fill="#000"/><rect x="22" y="15" width="1" height="1" fill="#fff"/><rect x="23" y="15" width="4" height="1" fill="#000"/><rect x="16" y="16" width="11" height="1" fill="#000"/><rect x="16" y="17" width="11" height="1" fill="#000"/><rect x="16" y="18" width="4" height="1" fill="#000"/><rect x="23" y="18" width="4" height="1" fill="#000"/><rect x="16" y="19" width="1" height="1" fill="#000"/><rect x="17" y="19" width="1" height="1" fill="#c0c0c0"/><rect x="18" y="19" width="2" height="1" fill="#000"/><rect x="23" y="19" width="2" height="1" fill="#000"/><rect x="25" y="19" width="1" height="1" fill="#c0c0c0"/><rect x="26" y="19" width="1" height="1" fill="#000"/><rect x="16" y="20" width="4" height="1" fill="#000"/><rect x="23" y="20" width="4" height="1" fill="#000"/></svg></div>
<div class="btn" style="left:348px;top:390px;width:37px;height:24px;"><i></i><svg class="a" style="left:-1px;top:-1px;" width="37" height="24" viewBox="0 0 37 24" shape-rendering="crispEdges"><rect x="13" y="4" width="11" height="1" fill="#000"/><rect x="11" y="5" width="2" height="1" fill="#000"/><rect x="13" y="5" width="11" height="1" fill="#fff"/><rect x="24" y="5" width="2" height="1" fill="#000"/><rect x="10" y="6" width="1" height="1" fill="#000"/><rect x="11" y="6" width="15" height="1" fill="#fff"/><rect x="26" y="6" width="1" height="1" fill="#000"/><rect x="10" y="7" width="3" height="1" fill="#000"/><rect x="13" y="7" width="11" height="1" fill="#fff"/><rect x="24" y="7" width="3" height="1" fill="#000"/><rect x="11" y="8" width="1" height="1" fill="#000"/><rect x="12" y="8" width="1" height="1" fill="#fff"/><rect x="13" y="8" width="11" height="1" fill="#000"/><rect x="24" y="8" width="1" height="1" fill="#808080"/><rect x="25" y="8" width="1" height="1" fill="#000"/><rect x="12" y="9" width="1" height="1" fill="#000"/><rect x="13" y="9" width="4" height="1" fill="#fff"/><rect x="17" y="9" width="1" height="1" fill="#e0e0e0"/><rect x="18" y="9" width="3" height="1" fill="#c0c0c0"/><rect x="21" y="9" width="1" height="1" fill="#a0a0a0"/><rect x="22" y="9" width="1" height="1" fill="#808080"/><rect x="23" y="9" width="1" height="1" fill="#000"/><rect x="13" y="10" width="1" height="1" fill="#000"/><rect x="14" y="10" width="3" height="1" fill="#fff"/><rect x="17" y="10" width="1" height="1" fill="#e0e0e0"/><rect x="18" y="10" width="2" height="1" fill="#c0c0c0"/><rect x="20" y="10" width="1" height="1" fill="#a0a0a0"/><rect x="21" y="10" width="1" height="1" fill="#808080"/><rect x="22" y="10" width="1" height="1" fill="#000"/><rect x="14" y="11" width="1" height="1" fill="#000"/><rect x="15" y="11" width="2" height="1" fill="#fff"/><rect x="17" y="11" width="1" height="1" fill="#e0e0e0"/><rect x="18" y="11" width="1" height="1" fill="#c0c0c0"/><rect x="19" y="11" width="1" height="1" fill="#a0a0a0"/><rect x="20" y="11" width="1" height="1" fill="#808080"/><rect x="21" y="11" width="1" height="1" fill="#000"/><rect x="15" y="12" width="1" height="1" fill="#000"/><rect x="16" y="12" width="1" height="1" fill="#fff"/><rect x="17" y="12" width="1" height="1" fill="#e0e0e0"/><rect x="18" y="12" width="1" height="1" fill="#a0a0a0"/><rect x="19" y="12" width="1" height="1" fill="#808080"/><rect x="20" y="12" width="1" height="1" fill="#000"/><rect x="16" y="13" width="1" height="1" fill="#000"/><rect x="17" y="13" width="1" height="1" fill="#e0e0e0"/><rect x="18" y="13" width="1" height="1" fill="#a0a0a0"/><rect x="19" y="13" width="1" height="1" fill="#000"/><rect x="16" y="14" width="1" height="1" fill="#000"/><rect x="17" y="14" width="1" height="1" fill="#e0e0e0"/><rect x="18" y="14" width="1" height="1" fill="#a0a0a0"/><rect x="19" y="14" width="1" height="1" fill="#000"/><rect x="16" y="15" width="1" height="1" fill="#000"/><rect x="17" y="15" width="1" height="1" fill="#e0e0e0"/><rect x="18" y="15" width="1" height="1" fill="#a0a0a0"/><rect x="19" y="15" width="1" height="1" fill="#000"/><rect x="16" y="16" width="1" height="1" fill="#000"/><rect x="17" y="16" width="1" height="1" fill="#e0e0e0"/><rect x="18" y="16" width="1" height="1" fill="#a0a0a0"/><rect x="19" y="16" width="1" height="1" fill="#000"/><rect x="16" y="17" width="1" height="1" fill="#000"/><rect x="17" y="17" width="1" height="1" fill="#e0e0e0"/><rect x="18" y="17" width="1" height="1" fill="#a0a0a0"/><rect x="19" y="17" width="1" height="1" fill="#000"/><rect x="16" y="18" width="1" height="1" fill="#000"/><rect x="17" y="18" width="1" height="1" fill="#e0e0e0"/><rect x="18" y="18" width="1" height="1" fill="#a0a0a0"/><rect x="19" y="18" width="1" height="1" fill="#000"/><rect x="16" y="19" width="4" height="1" fill="#000"/></svg></div>
<div class="btn" style="left:386px;top:390px;width:37px;height:24px;"><i></i><svg class="a" style="left:-1px;top:-1px;" width="37" height="24" viewBox="0 0 37 24" shape-rendering="crispEdges"><rect x="13" y="4" width="1" height="1" fill="#000"/><rect x="12" y="5" width="1" height="1" fill="#ff0000"/><rect x="13" y="5" width="1" height="1" fill="#ffa060"/><rect x="14" y="5" width="1" height="1" fill="#000"/><rect x="11" y="6" width="1" height="1" fill="#ff0000"/><rect x="12" y="6" width="3" height="1" fill="#ffa060"/><rect x="15" y="6" width="1" height="1" fill="#000"/><rect x="10" y="7" width="1" height="1" fill="#ff0000"/><rect x="11" y="7" width="5" height="1" fill="#ffa060"/><rect x="16" y="7" width="1" height="1" fill="#000"/><rect x="9" y="8" width="1" height="1" fill="#ff0000"/><rect x="10" y="8" width="7" height="1" fill="#ffa060"/><rect x="17" y="8" width="1" height="1" fill="#000"/><rect x="8" y="9" width="1" height="1" fill="#ff0000"/><rect x="9" y="9" width="9" height="1" fill="#ffa060"/><rect x="18" y="9" width="1" height="1" fill="#000"/><rect x="7" y="10" width="5" height="1" fill="#ff0000"/><rect x="12" y="10" width="1" height="1" fill="#fff"/><rect x="13" y="10" width="2" height="1" fill="#ffa060"/><rect x="15" y="10" width="5" height="1" fill="#000"/><rect x="11" y="11" width="1" height="1" fill="#ff0000"/><rect x="12" y="11" width="1" height="1" fill="#fff"/><rect x="13" y="11" width="2" height="1" fill="#ffa060"/><rect x="15" y="11" width="1" height="1" fill="#000"/><rect x="11" y="12" width="1" height="1" fill="#ff0000"/><rect x="12" y="12" width="1" height="1" fill="#fff"/><rect x="13" y="12" width="2" height="1" fill="#ffa060"/><rect x="15" y="12" width="1" height="1" fill="#000"/><rect x="11" y="13" width="1" height="1" fill="#ff0000"/><rect x="12" y="13" width="1" height="1" fill="#fff"/><rect x="13" y="13" width="2" height="1" fill="#ffa060"/><rect x="15" y="13" width="1" height="1" fill="#000"/><rect x="11" y="14" width="1" height="1" fill="#ff0000"/><rect x="12" y="14" width="1" height="1" fill="#fff"/><rect x="13" y="14" width="2" height="1" fill="#ffa060"/><rect x="15" y="14" width="1" height="1" fill="#000"/><rect x="11" y="15" width="1" height="1" fill="#ff0000"/><rect x="12" y="15" width="1" height="1" fill="#fff"/><rect x="13" y="15" width="2" height="1" fill="#ffa060"/><rect x="15" y="15" width="1" height="1" fill="#000"/><rect x="11" y="16" width="1" height="1" fill="#ff0000"/><rect x="12" y="16" width="1" height="1" fill="#fff"/><rect x="13" y="16" width="2" height="1" fill="#ffa060"/><rect x="15" y="16" width="1" height="1" fill="#000"/><rect x="11" y="17" width="1" height="1" fill="#ff0000"/><rect x="12" y="17" width="1" height="1" fill="#fff"/><rect x="13" y="17" width="2" height="1" fill="#ffa060"/><rect x="15" y="17" width="1" height="1" fill="#000"/><rect x="11" y="18" width="4" height="1" fill="#ff0000"/><rect x="15" y="18" width="1" height="1" fill="#000"/><rect x="21" y="5" width="5" height="1" fill="#000"/><rect x="21" y="6" width="1" height="1" fill="#000"/><rect x="22" y="6" width="1" height="1" fill="#fff"/><rect x="23" y="6" width="1" height="1" fill="#b8e4ff"/><rect x="24" y="6" width="1" height="1" fill="#1e90ff"/><rect x="25" y="6" width="1" height="1" fill="#000"/><rect x="21" y="7" width="1" height="1" fill="#000"/><rect x="22" y="7" width="1" height="1" fill="#fff"/><rect x="23" y="7" width="1" height="1" fill="#b8e4ff"/><rect x="24" y="7" width="1" height="1" fill="#1e90ff"/><rect x="25" y="7" width="1" height="1" fill="#000"/><rect x="21" y="8" width="1" height="1" fill="#000"/><rect x="22" y="8" width="1" height="1" fill="#fff"/><rect x="23" y="8" width="1" height="1" fill="#b8e4ff"/><rect x="24" y="8" width="1" height="1" fill="#1e90ff"/><rect x="25" y="8" width="1" height="1" fill="#000"/><rect x="21" y="9" width="1" height="1" fill="#000"/><rect x="22" y="9" width="1" height="1" fill="#fff"/><rect x="23" y="9" width="1" height="1" fill="#b8e4ff"/><rect x="24" y="9" width="1" height="1" fill="#1e90ff"/><rect x="25" y="9" width="1" height="1" fill="#000"/><rect x="21" y="10" width="1" height="1" fill="#000"/><rect x="22" y="10" width="1" height="1" fill="#fff"/><rect x="23" y="10" width="1" height="1" fill="#b8e4ff"/><rect x="24" y="10" width="1" height="1" fill="#1e90ff"/><rect x="25" y="10" width="1" height="1" fill="#000"/><rect x="21" y="11" width="1" height="1" fill="#000"/><rect x="22" y="11" width="1" height="1" fill="#fff"/><rect x="23" y="11" width="1" height="1" fill="#b8e4ff"/><rect x="24" y="11" width="1" height="1" fill="#1e90ff"/><rect x="25" y="11" width="1" height="1" fill="#000"/><rect x="21" y="12" width="1" height="1" fill="#000"/><rect x="22" y="12" width="1" height="1" fill="#fff"/><rect x="23" y="12" width="1" height="1" fill="#b8e4ff"/><rect x="24" y="12" width="1" height="1" fill="#1e90ff"/><rect x="25" y="12" width="1" height="1" fill="#000"/><rect x="17" y="13" width="4" height="1" fill="#000080"/><rect x="21" y="13" width="1" height="1" fill="#000"/><rect x="22" y="13" width="1" height="1" fill="#b8e4ff"/><rect x="23" y="13" width="2" height="1" fill="#1e90ff"/><rect x="25" y="13" width="5" height="1" fill="#000"/><rect x="18" y="14" width="1" height="1" fill="#000080"/><rect x="19" y="14" width="9" height="1" fill="#1e90ff"/><rect x="28" y="14" width="1" height="1" fill="#000"/><rect x="19" y="15" width="1" height="1" fill="#000080"/><rect x="20" y="15" width="7" height="1" fill="#1e90ff"/><rect x="27" y="15" width="1" height="1" fill="#000"/><rect x="20" y="16" width="1" height="1" fill="#000080"/><rect x="21" y="16" width="5" height="1" fill="#1e90ff"/><rect x="26" y="16" width="1" height="1" fill="#000"/><rect x="21" y="17" width="1" height="1" fill="#000080"/><rect x="22" y="17" width="3" height="1" fill="#1e90ff"/><rect x="25" y="17" width="1" height="1" fill="#000"/><rect x="22" y="18" width="1" height="1" fill="#000080"/><rect x="23" y="18" width="1" height="1" fill="#1e90ff"/><rect x="24" y="18" width="1" height="1" fill="#000"/><rect x="23" y="19" width="1" height="1" fill="#000"/></svg></div>
<div class="btn" style="left:424px;top:390px;width:37px;height:24px;"><i></i><svg class="a" style="left:-1px;top:-1px;" width="37" height="24" viewBox="0 0 37 24" shape-rendering="crispEdges"><rect x="16" y="4" width="9" height="1" fill="#000"/><rect x="15" y="5" width="1" height="1" fill="#000"/><rect x="16" y="5" width="8" height="1" fill="#fff"/><rect x="24" y="5" width="1" height="1" fill="#000"/><rect x="15" y="6" width="1" height="1" fill="#000"/><rect x="16" y="6" width="1" height="1" fill="#fff"/><rect x="17" y="6" width="4" height="1" fill="#000080"/><rect x="21" y="6" width="2" height="1" fill="#fff"/><rect x="23" y="6" width="1" height="1" fill="#000"/><rect x="14" y="7" width="1" height="1" fill="#000"/><rect x="15" y="7" width="8" height="1" fill="#fff"/><rect x="23" y="7" width="1" height="1" fill="#000"/><rect x="14" y="8" width="1" height="1" fill="#000"/><rect x="15" y="8" width="1" height="1" fill="#fff"/><rect x="16" y="8" width="4" height="1" fill="#000080"/><rect x="20" y="8" width="2" height="1" fill="#fff"/><rect x="22" y="8" width="4" height="1" fill="#000"/><rect x="13" y="9" width="1" height="1" fill="#000"/><rect x="14" y="9" width="8" height="1" fill="#fff"/><rect x="22" y="9" width="1" height="1" fill="#000"/><rect x="23" y="9" width="2" height="1" fill="#c0c0c0"/><rect x="25" y="9" width="2" height="1" fill="#000"/><rect x="12" y="10" width="11" height="1" fill="#000"/><rect x="23" y="10" width="1" height="1" fill="#c0c0c0"/><rect x="24" y="10" width="1" height="1" fill="#000"/><rect x="25" y="10" width="1" height="1" fill="#c0c0c0"/><rect x="26" y="10" width="1" height="1" fill="#000"/><rect x="11" y="11" width="1" height="1" fill="#000"/><rect x="12" y="11" width="10" height="1" fill="#e0e0e0"/><rect x="22" y="11" width="1" height="1" fill="#000"/><rect x="23" y="11" width="2" height="1" fill="#c0c0c0"/><rect x="25" y="11" width="2" height="1" fill="#000"/><rect x="10" y="12" width="13" height="1" fill="#000"/><rect x="23" y="12" width="1" height="1" fill="#c0c0c0"/><rect x="24" y="12" width="2" height="1" fill="#000"/><rect x="10" y="13" width="1" height="1" fill="#000"/><rect x="11" y="13" width="1" height="1" fill="#c0c0c0"/><rect x="12" y="13" width="2" height="1" fill="#ff0000"/><rect x="14" y="13" width="2" height="1" fill="#008000"/><rect x="16" y="13" width="6" height="1" fill="#c0c0c0"/><rect x="22" y="13" width="3" height="1" fill="#000"/><rect x="10" y="14" width="1" height="1" fill="#000"/><rect x="11" y="14" width="11" height="1" fill="#c0c0c0"/><rect x="22" y="14" width="2" height="1" fill="#000"/><rect x="10" y="15" width="13" height="1" fill="#000"/><rect x="11" y="16" width="1" height="1" fill="#000"/><rect x="12" y="16" width="9" height="1" fill="#e0e0e0"/><rect x="21" y="16" width="2" height="1" fill="#000"/><rect x="11" y="17" width="11" height="1" fill="#000"/></svg></div>
<div class="btn" style="left:467px;top:390px;width:37px;height:24px;"><i></i><svg class="a" style="left:-1px;top:-1px;" width="37" height="24" viewBox="0 0 37 24" shape-rendering="crispEdges"><rect x="12" y="5" width="7" height="1" fill="#808000"/><rect x="12" y="6" width="1" height="1" fill="#808000"/><rect x="13" y="6" width="5" height="1" fill="#fff"/><rect x="18" y="6" width="1" height="1" fill="#808000"/><rect x="19" y="6" width="1" height="1" fill="#000"/><rect x="12" y="7" width="1" height="1" fill="#808000"/><rect x="13" y="7" width="4" height="1" fill="#fff"/><rect x="17" y="7" width="1" height="1" fill="#ffff90"/><rect x="18" y="7" width="1" height="1" fill="#808000"/><rect x="19" y="7" width="1" height="1" fill="#fff"/><rect x="20" y="7" width="1" height="1" fill="#000"/><rect x="12" y="8" width="1" height="1" fill="#808000"/><rect x="13" y="8" width="3" height="1" fill="#fff"/><rect x="16" y="8" width="1" height="1" fill="#ffff90"/><rect x="17" y="8" width="1" height="1" fill="#fff"/><rect x="18" y="8" width="1" height="1" fill="#808000"/><rect x="19" y="8" width="2" height="1" fill="#fff"/><rect x="21" y="8" width="1" height="1" fill="#000"/><rect x="12" y="9" width="1" height="1" fill="#808000"/><rect x="13" y="9" width="4" height="1" fill="#fff"/><rect x="17" y="9" width="2" height="1" fill="#ffff90"/><rect x="19" y="9" width="4" height="1" fill="#000"/><rect x="12" y="10" width="1" height="1" fill="#808000"/><rect x="13" y="10" width="2" height="1" fill="#fff"/><rect x="15" y="10" width="1" height="1" fill="#ffff90"/><rect x="16" y="10" width="1" height="1" fill="#fff"/><rect x="17" y="10" width="5" height="1" fill="#ffff90"/><rect x="22" y="10" width="1" height="1" fill="#000"/><rect x="12" y="11" width="1" height="1" fill="#808000"/><rect x="13" y="11" width="3" height="1" fill="#fff"/><rect x="16" y="11" width="6" height="1" fill="#ffff90"/><rect x="22" y="11" width="1" height="1" fill="#000"/><rect x="12" y="12" width="1" height="1" fill="#808000"/><rect x="13" y="12" width="1" height="1" fill="#fff"/><rect x="14" y="12" width="1" height="1" fill="#ffff90"/><rect x="15" y="12" width="1" height="1" fill="#fff"/><rect x="16" y="12" width="6" height="1" fill="#ffff90"/><rect x="22" y="12" width="1" height="1" fill="#000"/><rect x="12" y="13" width="1" height="1" fill="#808000"/><rect x="13" y="13" width="2" height="1" fill="#fff"/><rect x="15" y="13" width="7" height="1" fill="#ffff90"/><rect x="22" y="13" width="1" height="1" fill="#000"/><rect x="12" y="14" width="1" height="1" fill="#808000"/><rect x="13" y="14" width="1" height="1" fill="#fff"/><rect x="14" y="14" width="8" height="1" fill="#ffff90"/><rect x="22" y="14" width="1" height="1" fill="#000"/><rect x="12" y="15" width="1" height="1" fill="#808000"/><rect x="13" y="15" width="1" height="1" fill="#fff"/><rect x="14" y="15" width="5" height="1" fill="#ffff90"/><rect x="19" y="15" width="1" height="1" fill="#ffc040"/><rect x="20" y="15" width="2" height="1" fill="#ffff90"/><rect x="22" y="15" width="1" height="1" fill="#000"/><rect x="12" y="16" width="1" height="1" fill="#808000"/><rect x="13" y="16" width="1" height="1" fill="#fff"/><rect x="14" y="16" width="4" height="1" fill="#ffff90"/><rect x="18" y="16" width="1" height="1" fill="#ffc040"/><rect x="19" y="16" width="1" height="1" fill="#ffff90"/><rect x="20" y="16" width="1" height="1" fill="#ffc040"/><rect x="21" y="16" width="1" height="1" fill="#ffff90"/><rect x="22" y="16" width="1" height="1" fill="#000"/><rect x="12" y="17" width="1" height="1" fill="#808000"/><rect x="13" y="17" width="1" height="1" fill="#fff"/><rect x="14" y="17" width="5" height="1" fill="#ffff90"/><rect x="19" y="17" width="1" height="1" fill="#ffc040"/><rect x="20" y="17" width="2" height="1" fill="#ffff90"/><rect x="22" y="17" width="1" height="1" fill="#000"/><rect x="12" y="18" width="11" height="1" fill="#000"/></svg></div>
<div class="btn" style="left:505px;top:390px;width:37px;height:24px;"><i></i><svg class="a" style="left:-1px;top:-1px;" width="37" height="24" viewBox="0 0 37 24" shape-rendering="crispEdges"><rect x="11" y="6" width="8" height="1" fill="#808000"/><rect x="19" y="6" width="1" height="1" fill="#000"/><rect x="11" y="7" width="1" height="1" fill="#808000"/><rect x="12" y="7" width="7" height="1" fill="#ffff90"/><rect x="19" y="7" width="1" height="1" fill="#000"/><rect x="11" y="8" width="1" height="1" fill="#808000"/><rect x="12" y="8" width="1" height="1" fill="#ffff90"/><rect x="13" y="8" width="4" height="1" fill="#000080"/><rect x="17" y="8" width="2" height="1" fill="#ffff90"/><rect x="19" y="8" width="1" height="1" fill="#000"/><rect x="11" y="9" width="1" height="1" fill="#808000"/><rect x="12" y="9" width="7" height="1" fill="#ffff90"/><rect x="19" y="9" width="1" height="1" fill="#000"/><rect x="11" y="10" width="1" height="1" fill="#808000"/><rect x="12" y="10" width="1" height="1" fill="#ffff90"/><rect x="13" y="10" width="4" height="1" fill="#000080"/><rect x="17" y="10" width="2" height="1" fill="#ffff90"/><rect x="19" y="10" width="4" height="1" fill="#000"/><rect x="11" y="11" width="1" height="1" fill="#808000"/><rect x="12" y="11" width="10" height="1" fill="#ffff90"/><rect x="22" y="11" width="1" height="1" fill="#000"/><rect x="11" y="12" width="1" height="1" fill="#808000"/><rect x="12" y="12" width="1" height="1" fill="#ffff90"/><rect x="13" y="12" width="7" height="1" fill="#000080"/><rect x="20" y="12" width="2" height="1" fill="#ffff90"/><rect x="22" y="12" width="1" height="1" fill="#000"/><rect x="11" y="13" width="1" height="1" fill="#808000"/><rect x="12" y="13" width="10" height="1" fill="#ffff90"/><rect x="22" y="13" width="1" height="1" fill="#000"/><rect x="11" y="14" width="1" height="1" fill="#808000"/><rect x="12" y="14" width="1" height="1" fill="#ffff90"/><rect x="13" y="14" width="8" height="1" fill="#ff0000"/><rect x="21" y="14" width="1" height="1" fill="#ffff90"/><rect x="22" y="14" width="1" height="1" fill="#000"/><rect x="11" y="15" width="1" height="1" fill="#808000"/><rect x="12" y="15" width="8" height="1" fill="#ffff90"/><rect x="20" y="15" width="2" height="1" fill="#ffc040"/><rect x="22" y="15" width="1" height="1" fill="#000"/><rect x="11" y="16" width="1" height="1" fill="#808000"/><rect x="12" y="16" width="2" height="1" fill="#ffff90"/><rect x="14" y="16" width="1" height="1" fill="#ffc040"/><rect x="15" y="16" width="1" height="1" fill="#ffff90"/><rect x="16" y="16" width="1" height="1" fill="#ffc040"/><rect x="17" y="16" width="1" height="1" fill="#ffff90"/><rect x="18" y="16" width="1" height="1" fill="#ffc040"/><rect x="19" y="16" width="1" height="1" fill="#ffff90"/><rect x="20" y="16" width="2" height="1" fill="#ffc040"/><rect x="22" y="16" width="1" height="1" fill="#000"/><rect x="11" y="17" width="1" height="1" fill="#808000"/><rect x="12" y="17" width="1" height="1" fill="#ffff90"/><rect x="13" y="17" width="1" height="1" fill="#ffc040"/><rect x="14" y="17" width="1" height="1" fill="#ffff90"/><rect x="15" y="17" width="1" height="1" fill="#ffc040"/><rect x="16" y="17" width="1" height="1" fill="#ffff90"/><rect x="17" y="17" width="1" height="1" fill="#ffc040"/><rect x="18" y="17" width="1" height="1" fill="#ffff90"/><rect x="19" y="17" width="3" height="1" fill="#ffc040"/><rect x="22" y="17" width="1" height="1" fill="#000"/><rect x="11" y="18" width="1" height="1" fill="#808000"/><rect x="12" y="18" width="2" height="1" fill="#ffff90"/><rect x="14" y="18" width="1" height="1" fill="#ffc040"/><rect x="15" y="18" width="1" height="1" fill="#ffff90"/><rect x="16" y="18" width="1" height="1" fill="#ffc040"/><rect x="17" y="18" width="1" height="1" fill="#ffff90"/><rect x="18" y="18" width="1" height="1" fill="#ffc040"/><rect x="19" y="18" width="1" height="1" fill="#ffff90"/><rect x="20" y="18" width="2" height="1" fill="#ffc040"/><rect x="22" y="18" width="1" height="1" fill="#000"/><rect x="11" y="19" width="12" height="1" fill="#000"/><path d="M25.5 4.5L20.5 12.5" stroke="#000" stroke-width="3" fill="none" shape-rendering="auto"/><path d="M25 5.5L21 12" stroke="#ffe800" stroke-width="1.2" fill="none" shape-rendering="auto"/><rect x="25" y="4" width="2" height="2" fill="#e00000"/><rect x="19" y="12" width="2" height="2" fill="#000"/></svg></div>
<div class="btn" style="left:543px;top:390px;width:37px;height:24px;"><i></i><svg class="a" style="left:-1px;top:-1px;" width="37" height="24" viewBox="0 0 37 24" shape-rendering="crispEdges"><rect x="11" y="4" width="7" height="1" fill="#808000"/><rect x="11" y="5" width="1" height="1" fill="#808000"/><rect x="12" y="5" width="5" height="1" fill="#ffffe8"/><rect x="17" y="5" width="1" height="1" fill="#808000"/><rect x="18" y="5" width="1" height="1" fill="#000"/><rect x="11" y="6" width="1" height="1" fill="#808000"/><rect x="12" y="6" width="1" height="1" fill="#ffffe8"/><rect x="13" y="6" width="3" height="1" fill="#000080"/><rect x="16" y="6" width="1" height="1" fill="#ffffe8"/><rect x="17" y="6" width="1" height="1" fill="#808000"/><rect x="18" y="6" width="1" height="1" fill="#fff"/><rect x="19" y="6" width="1" height="1" fill="#000"/><rect x="11" y="7" width="1" height="1" fill="#808000"/><rect x="12" y="7" width="5" height="1" fill="#ffffe8"/><rect x="17" y="7" width="1" height="1" fill="#808000"/><rect x="18" y="7" width="2" height="1" fill="#fff"/><rect x="20" y="7" width="1" height="1" fill="#000"/><rect x="11" y="8" width="1" height="1" fill="#808000"/><rect x="12" y="8" width="1" height="1" fill="#ffffe8"/><rect x="13" y="8" width="3" height="1" fill="#000080"/><rect x="16" y="8" width="1" height="1" fill="#ffffe8"/><rect x="17" y="8" width="1" height="1" fill="#808000"/><rect x="18" y="8" width="3" height="1" fill="#fff"/><rect x="21" y="8" width="1" height="1" fill="#000"/><rect x="11" y="9" width="1" height="1" fill="#808000"/><rect x="12" y="9" width="5" height="1" fill="#ffffe8"/><rect x="17" y="9" width="1" height="1" fill="#808000"/><rect x="18" y="9" width="5" height="1" fill="#000"/><rect x="11" y="10" width="1" height="1" fill="#808000"/><rect x="12" y="10" width="1" height="1" fill="#ffffe8"/><rect x="13" y="10" width="6" height="1" fill="#000080"/><rect x="19" y="10" width="3" height="1" fill="#ffff90"/><rect x="22" y="10" width="1" height="1" fill="#000"/><rect x="11" y="11" width="1" height="1" fill="#808000"/><rect x="12" y="11" width="6" height="1" fill="#ffffe8"/><rect x="18" y="11" width="4" height="1" fill="#ffff90"/><rect x="22" y="11" width="1" height="1" fill="#000"/><rect x="11" y="12" width="1" height="1" fill="#808000"/><rect x="12" y="12" width="1" height="1" fill="#ffffe8"/><rect x="13" y="12" width="6" height="1" fill="#000080"/><rect x="19" y="12" width="2" height="1" fill="#ffff90"/><rect x="21" y="12" width="1" height="1" fill="#ffc040"/><rect x="22" y="12" width="1" height="1" fill="#000"/><rect x="11" y="13" width="1" height="1" fill="#808000"/><rect x="12" y="13" width="5" height="1" fill="#ffffe8"/><rect x="17" y="13" width="4" height="1" fill="#ffff90"/><rect x="21" y="13" width="1" height="1" fill="#ffc040"/><rect x="22" y="13" width="1" height="1" fill="#000"/><rect x="11" y="14" width="1" height="1" fill="#808000"/><rect x="12" y="14" width="1" height="1" fill="#ffffe8"/><rect x="13" y="14" width="6" height="1" fill="#000080"/><rect x="19" y="14" width="1" height="1" fill="#ffff90"/><rect x="20" y="14" width="2" height="1" fill="#ffc040"/><rect x="22" y="14" width="1" height="1" fill="#000"/><rect x="11" y="15" width="1" height="1" fill="#808000"/><rect x="12" y="15" width="3" height="1" fill="#ffffe8"/><rect x="15" y="15" width="4" height="1" fill="#ffff90"/><rect x="19" y="15" width="1" height="1" fill="#ffc040"/><rect x="20" y="15" width="1" height="1" fill="#ffff90"/><rect x="21" y="15" width="1" height="1" fill="#ffc040"/><rect x="22" y="15" width="1" height="1" fill="#000"/><rect x="11" y="16" width="1" height="1" fill="#808000"/><rect x="12" y="16" width="1" height="1" fill="#ffffe8"/><rect x="13" y="16" width="1" height="1" fill="#ffff90"/><rect x="14" y="16" width="1" height="1" fill="#ffc040"/><rect x="15" y="16" width="1" height="1" fill="#ffff90"/><rect x="16" y="16" width="1" height="1" fill="#ffc040"/><rect x="17" y="16" width="1" height="1" fill="#ffff90"/><rect x="18" y="16" width="1" height="1" fill="#ffc040"/><rect x="19" y="16" width="1" height="1" fill="#ffff90"/><rect x="20" y="16" width="2" height="1" fill="#ffc040"/><rect x="22" y="16" width="1" height="1" fill="#000"/><rect x="11" y="17" width="12" height="1" fill="#000"/><path d="M18.5 12.5L26.5 20.5M26.5 13.5L18.5 20.5" stroke="#d00000" stroke-width="1.3" fill="none" shape-rendering="auto"/><rect x="18" y="19" width="2" height="2" fill="#e00000"/></svg></div>
<div class="btn" style="left:586px;top:390px;width:37px;height:24px;"><i></i><svg class="a" style="left:-1px;top:-1px;" width="37" height="24" viewBox="0 0 37 24" shape-rendering="crispEdges"><rect x="12" y="7" width="6" height="1" fill="#808000"/><rect x="11" y="8" width="1" height="1" fill="#808000"/><rect x="12" y="8" width="1" height="1" fill="#ffff90"/><rect x="13" y="8" width="1" height="1" fill="#ffc040"/><rect x="14" y="8" width="1" height="1" fill="#ffff90"/><rect x="15" y="8" width="1" height="1" fill="#ffc040"/><rect x="16" y="8" width="1" height="1" fill="#ffff90"/><rect x="17" y="8" width="1" height="1" fill="#ffc040"/><rect x="18" y="8" width="1" height="1" fill="#000"/><rect x="10" y="9" width="1" height="1" fill="#808000"/><rect x="11" y="9" width="8" height="1" fill="#ffff90"/><rect x="19" y="9" width="1" height="1" fill="#000"/><rect x="9" y="10" width="15" height="1" fill="#808000"/><rect x="24" y="10" width="1" height="1" fill="#000"/><rect x="9" y="11" width="1" height="1" fill="#808000"/><rect x="10" y="11" width="14" height="1" fill="#ffe800"/><rect x="24" y="11" width="1" height="1" fill="#000"/><rect x="9" y="12" width="1" height="1" fill="#808000"/><rect x="10" y="12" width="1" height="1" fill="#ffe800"/><rect x="11" y="12" width="1" height="1" fill="#fff"/><rect x="12" y="12" width="1" height="1" fill="#ffe800"/><rect x="13" y="12" width="1" height="1" fill="#fff"/><rect x="14" y="12" width="1" height="1" fill="#ffe800"/><rect x="15" y="12" width="1" height="1" fill="#fff"/><rect x="16" y="12" width="8" height="1" fill="#ffe800"/><rect x="24" y="12" width="1" height="1" fill="#000"/><rect x="9" y="13" width="1" height="1" fill="#808000"/><rect x="10" y="13" width="2" height="1" fill="#ffe800"/><rect x="12" y="13" width="1" height="1" fill="#fff"/><rect x="13" y="13" width="1" height="1" fill="#ffe800"/><rect x="14" y="13" width="1" height="1" fill="#fff"/><rect x="15" y="13" width="1" height="1" fill="#ffe800"/><rect x="16" y="13" width="1" height="1" fill="#fff"/><rect x="17" y="13" width="4" height="1" fill="#ffe800"/><rect x="21" y="13" width="1" height="1" fill="#ffc040"/><rect x="22" y="13" width="2" height="1" fill="#ffe800"/><rect x="24" y="13" width="1" height="1" fill="#000"/><rect x="9" y="14" width="1" height="1" fill="#808000"/><rect x="10" y="14" width="1" height="1" fill="#ffe800"/><rect x="11" y="14" width="1" height="1" fill="#fff"/><rect x="12" y="14" width="1" height="1" fill="#ffe800"/><rect x="13" y="14" width="1" height="1" fill="#fff"/><rect x="14" y="14" width="1" height="1" fill="#ffe800"/><rect x="15" y="14" width="1" height="1" fill="#fff"/><rect x="16" y="14" width="4" height="1" fill="#ffe800"/><rect x="20" y="14" width="1" height="1" fill="#ffc040"/><rect x="21" y="14" width="1" height="1" fill="#ffe800"/><rect x="22" y="14" width="1" height="1" fill="#ffc040"/><rect x="23" y="14" width="1" height="1" fill="#ffe800"/><rect x="24" y="14" width="1" height="1" fill="#000"/><rect x="9" y="15" width="1" height="1" fill="#808000"/><rect x="10" y="15" width="2" height="1" fill="#ffe800"/><rect x="12" y="15" width="1" height="1" fill="#fff"/><rect x="13" y="15" width="1" height="1" fill="#ffe800"/><rect x="14" y="15" width="1" height="1" fill="#fff"/><rect x="15" y="15" width="4" height="1" fill="#ffe800"/><rect x="19" y="15" width="1" height="1" fill="#ffc040"/><rect x="20" y="15" width="1" height="1" fill="#ffe800"/><rect x="21" y="15" width="1" height="1" fill="#ffc040"/><rect x="22" y="15" width="2" height="1" fill="#ffe800"/><rect x="24" y="15" width="1" height="1" fill="#000"/><rect x="9" y="16" width="1" height="1" fill="#808000"/><rect x="10" y="16" width="1" height="1" fill="#ffe800"/><rect x="11" y="16" width="1" height="1" fill="#fff"/><rect x="12" y="16" width="1" height="1" fill="#ffe800"/><rect x="13" y="16" width="1" height="1" fill="#fff"/><rect x="14" y="16" width="4" height="1" fill="#ffe800"/><rect x="18" y="16" width="1" height="1" fill="#ffc040"/><rect x="19" y="16" width="1" height="1" fill="#ffe800"/><rect x="20" y="16" width="1" height="1" fill="#ffc040"/><rect x="21" y="16" width="1" height="1" fill="#ffe800"/><rect x="22" y="16" width="1" height="1" fill="#ffc040"/><rect x="23" y="16" width="1" height="1" fill="#ffe800"/><rect x="24" y="16" width="1" height="1" fill="#000"/><rect x="9" y="17" width="1" height="1" fill="#808000"/><rect x="10" y="17" width="7" height="1" fill="#ffe800"/><rect x="17" y="17" width="1" height="1" fill="#ffc040"/><rect x="18" y="17" width="1" height="1" fill="#ffe800"/><rect x="19" y="17" width="1" height="1" fill="#ffc040"/><rect x="20" y="17" width="1" height="1" fill="#ffe800"/><rect x="21" y="17" width="1" height="1" fill="#ffc040"/><rect x="22" y="17" width="2" height="1" fill="#ffe800"/><rect x="24" y="17" width="1" height="1" fill="#000"/><rect x="9" y="18" width="1" height="1" fill="#808000"/><rect x="10" y="18" width="14" height="1" fill="#ffe800"/><rect x="24" y="18" width="1" height="1" fill="#000"/><rect x="9" y="19" width="16" height="1" fill="#000"/><rect x="23" y="4" width="4" height="1" fill="#000080"/><rect x="23" y="5" width="3" height="1" fill="#000080"/><rect x="23" y="6" width="2" height="1" fill="#000080"/><rect x="26" y="6" width="1" height="1" fill="#000080"/><rect x="23" y="7" width="1" height="1" fill="#000080"/><rect x="27" y="7" width="1" height="1" fill="#000080"/><rect x="28" y="8" width="1" height="1" fill="#000080"/></svg></div>
<div class="btn" style="left:629px;top:390px;width:37px;height:24px;"><i></i><svg class="a" style="left:-1px;top:-1px;" width="37" height="24" viewBox="0 0 37 24" shape-rendering="crispEdges"></svg><span class="a" style="left:12.3px;top:1.5px;font-size:18px;line-height:20px;color:#ffe800;-webkit-text-stroke:0.5px #ffe800;text-shadow:1px 0 0 #000,-1px 0 0 #000,0 1px 0 #000,0 -1px 0 #000,1px 1px 0 #000,-1px -1px 0 #000,1px -1px 0 #000,-1px 1px 0 #000;">?</span></div>
</div>
</body>
</html>
